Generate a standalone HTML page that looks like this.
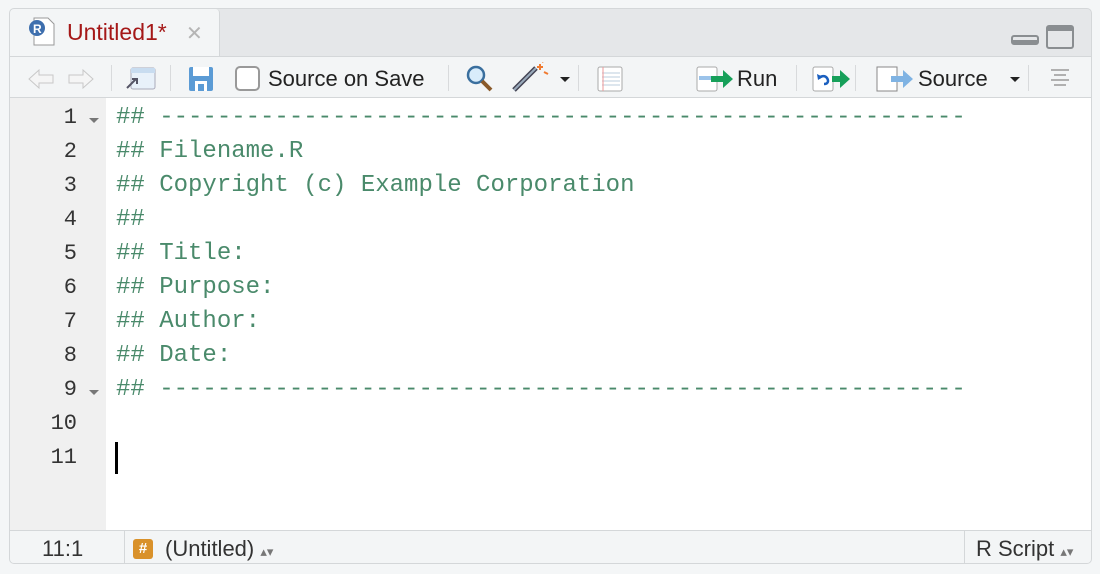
<!DOCTYPE html>
<html><head><style>
*{margin:0;padding:0;box-sizing:border-box}
body{width:1100px;height:574px;background:#f4f6f7;position:relative;overflow:hidden;font-family:"Liberation Sans",sans-serif}
.panel{position:absolute;left:9px;top:8px;width:1083px;height:556px;border:1px solid #d4d7d9;border-radius:5px;background:#e5e7e9;overflow:hidden}
.tab{position:absolute;left:0;top:0;width:210px;height:47px;background:#f3f5f6;border-right:1px solid #d4d7d9;border-radius:4px 4px 0 0}
.tabtxt{position:absolute;left:57px;top:10px;font-size:23px;color:#a51818}
.x{position:absolute;left:176px;top:12px;font-size:20px;color:#b5b5b5}
.tb{position:absolute;left:0;top:47px;width:100%;height:42px;background:#f3f5f6;border-top:1px solid #d4d7d9;border-bottom:1px solid #d4d7d9}
.sep{position:absolute;top:8px;width:1px;height:26px;background:#d8dadc}
.t{position:absolute;top:9px;font-size:22px;color:#222}
.ed{position:absolute;left:0;top:89px;width:100%;height:432px;background:#fff}
.gut{position:absolute;left:0;top:0;width:96px;height:100%;background:#f0f0f0}
.ln{position:absolute;right:1014px;font-family:"Liberation Mono",monospace;font-size:22px;color:#333;text-align:right;width:80px}
.code{position:absolute;left:106px;font-family:"Liberation Mono",monospace;font-size:24px;color:#4a8a6b;white-space:pre}
.fold{position:absolute;left:79px;width:0;height:0;border-left:5px solid transparent;border-right:5px solid transparent;border-top:5px solid #777}
.sb{position:absolute;left:0;top:521px;width:100%;height:35px;background:#f3f5f6;border-top:1px solid #d4d7d9;font-size:22px;color:#333}
</style></head><body>
<div class="panel">
 <div class="tab">
  <svg style="position:absolute;left:17px;top:8px" width="30" height="30"><path d="M7 1h14l6 6v21H7z" fill="#fff" stroke="#999"/><circle cx="10" cy="11" r="8" fill="#3e6fae"/><text x="6" y="16" font-size="12" fill="#fff" font-weight="bold" font-family="Liberation Sans">R</text></svg>
  <div class="tabtxt">Untitled1*</div><div class="x" style="left:176px">✕</div>
 </div>
 <svg style="position:absolute;left:1000px;top:15px" width="70" height="26"><rect x="2" y="12" width="26" height="8" rx="2" fill="none" stroke="#8a8e91" stroke-width="2"/><rect x="2" y="16" width="26" height="4" fill="#8a8e91"/><rect x="37" y="2" width="26" height="22" rx="2" fill="none" stroke="#8a8e91" stroke-width="2"/><rect x="37" y="2" width="26" height="5" fill="#8a8e91"/></svg>
 <div class="tb">
  <svg style="position:absolute;left:17px;top:10px" width="70" height="24"><path d="M2 12l10-9v5h14v8H12v5z" fill="#f5f5f5" stroke="#c8c8c8"/><path d="M66 12l-10-9v5H42v8h14v5z" fill="#f5f5f5" stroke="#c8c8c8"/></svg>
  <div class="sep" style="left:101px"></div>
  <svg style="position:absolute;left:113px;top:9px" width="34" height="26"><rect x="8" y="2" width="24" height="21" rx="2" fill="#e8f1fa" stroke="#aab"/><rect x="8" y="2" width="24" height="5" fill="#c8dcf0"/><path d="M4 22l9-9M9 13h5v5" stroke="#556" stroke-width="2" fill="none"/></svg>
  <div class="sep" style="left:160px"></div>
  <svg style="position:absolute;left:178px;top:9px" width="26" height="26"><rect x="1" y="1" width="24" height="24" rx="2" fill="#5b9bd5"/><rect x="5" y="1" width="16" height="9" fill="#fff"/><rect x="7" y="15" width="12" height="10" fill="#fff"/><rect x="10" y="18" width="6" height="7" fill="#5b9bd5"/></svg>
  <div style="position:absolute;left:225px;top:9px;width:25px;height:25px;border:2px solid #999;border-radius:5px;background:#fff"></div>
  <div class="t" style="left:258px">Source on Save</div>
  <div class="sep" style="left:438px"></div>
  <svg style="position:absolute;left:455px;top:7px" width="30" height="30"><circle cx="11" cy="11" r="8" fill="#d8ecfb" stroke="#3a6f9e" stroke-width="2.5"/><path d="M17 17l9 9" stroke="#8a5a2a" stroke-width="4"/></svg>
  <svg style="position:absolute;left:500px;top:5px" width="40" height="32"><path d="M4 28L26 6" stroke="#445" stroke-width="5"/><path d="M4 28L26 6" stroke="#9ab" stroke-width="2"/><path d="M30 2v6M27 5h6M34 10l4 2M32 0l3-2" stroke="#f07a30" stroke-width="2"/></svg>
  <div style="position:absolute;left:550px;top:20px;border-left:5px solid transparent;border-right:5px solid transparent;border-top:5px solid #222"></div>
  <div class="sep" style="left:568px"></div>
  <svg style="position:absolute;left:585px;top:9px" width="28" height="26"><rect x="3" y="1" width="24" height="24" rx="2" fill="#fff" stroke="#aaa"/><path d="M7 7h18M7 11h18M7 15h18M7 19h18" stroke="#bcd" /><path d="M8 1v24" stroke="#e99"/></svg>
  <svg style="position:absolute;left:686px;top:9px" width="40" height="26"><rect x="1" y="1" width="20" height="24" rx="2" fill="#fff" stroke="#aaa"/><path d="M3 12h14" stroke="#9bc3ea" stroke-width="4"/><path d="M15 10h12v-6l10 9-10 9v-6H15z" fill="#17a05a"/></svg>
  <div class="t" style="left:727px">Run</div>
  <div class="sep" style="left:786px"></div>
  <svg style="position:absolute;left:802px;top:9px" width="40" height="26"><rect x="1" y="1" width="20" height="24" rx="2" fill="#fff" stroke="#aaa"/><path d="M12 18c4 0 5-3 3-6s-6-2-8 0" stroke="#1a5fbf" stroke-width="2.5" fill="none"/><path d="M5 8l1 6 5-3z" fill="#1a5fbf"/><path d="M20 10h8v-6l10 9-10 9v-6h-8z" fill="#17a05a"/></svg>
  <div class="sep" style="left:845px"></div>
  <svg style="position:absolute;left:866px;top:9px" width="40" height="26"><rect x="1" y="1" width="20" height="24" fill="#fff" stroke="#888"/><path d="M15 10h12v-6l10 9-10 9v-6H15z" fill="#7fb3e3"/></svg>
  <div class="t" style="left:908px">Source</div>
  <div style="position:absolute;left:1000px;top:20px;border-left:5px solid transparent;border-right:5px solid transparent;border-top:5px solid #222"></div>
  <div class="sep" style="left:1018px"></div>
  <svg style="position:absolute;left:1038px;top:11px" width="24" height="20"><path d="M3 2h18M6 7h12M3 12h18M6 17h12" stroke="#999" stroke-width="1.5"/></svg>
 </div>
 <div class="ed">
  <div class="gut"></div>
  <div class="ln" style="top:7px">1</div><div class="fold" style="top:20px"></div>
  <div class="ln" style="top:41px">2</div>
  <div class="ln" style="top:75px">3</div>
  <div class="ln" style="top:109px">4</div>
  <div class="ln" style="top:143px">5</div>
  <div class="ln" style="top:177px">6</div>
  <div class="ln" style="top:211px">7</div>
  <div class="ln" style="top:245px">8</div>
  <div class="ln" style="top:279px">9</div><div class="fold" style="top:292px"></div>
  <div class="ln" style="top:313px">10</div>
  <div class="ln" style="top:347px">11</div>
  <div class="code" style="top:6px">## --------------------------------------------------------</div>
  <div class="code" style="top:40px">## Filename.R</div>
  <div class="code" style="top:74px">## Copyright (c) Example Corporation</div>
  <div class="code" style="top:108px">##</div>
  <div class="code" style="top:142px">## Title:</div>
  <div class="code" style="top:176px">## Purpose:</div>
  <div class="code" style="top:210px">## Author:</div>
  <div class="code" style="top:244px">## Date:</div>
  <div class="code" style="top:278px">## --------------------------------------------------------</div>
  <div style="position:absolute;left:105px;top:344px;width:3px;height:32px;background:#000"></div>
 </div>
 <div class="sb">
  <div style="position:absolute;left:32px;top:5px">11:1</div>
  <div style="position:absolute;left:114px;top:0;width:1px;height:35px;background:#d4d7d9"></div>
  <div style="position:absolute;left:123px;top:8px;width:20px;height:20px;background:#d9912a;border-radius:3px;color:#fff;font-size:15px;text-align:center;line-height:20px;font-weight:bold">#</div>
  <div style="position:absolute;left:155px;top:5px">(Untitled) <span style="font-size:13px;color:#777">▴▾</span></div>
  <div style="position:absolute;left:954px;top:0;width:1px;height:35px;background:#d4d7d9"></div>
  <div style="position:absolute;left:966px;top:5px">R Script <span style="font-size:13px;color:#777">▴▾</span></div>
 </div>
</div>
</body></html>
